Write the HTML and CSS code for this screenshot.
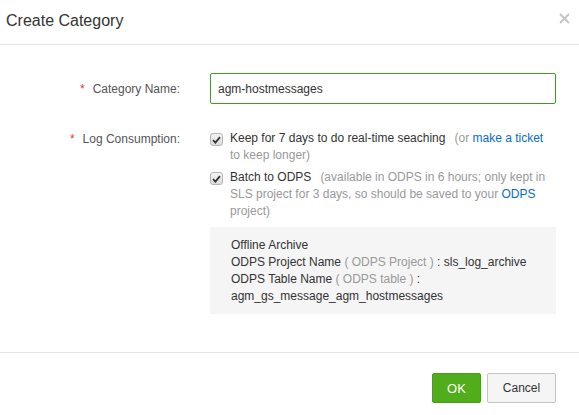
FILE: index.html
```html
<!DOCTYPE html>
<html>
<head>
<meta charset="utf-8">
<link rel="stylesheet" href="styles.css">
</head>
<body>
<div class="dialog">
  <div class="header">
    <div class="title">Create Category</div>
    <span class="close" aria-label="close">
      <svg width="11" height="11" viewBox="0 0 11 11"><path d="M1 1L10 10M10 1L1 10" stroke="#c4c4c4" stroke-width="1.8" fill="none"/></svg>
    </span>
  </div>
  <div class="form">
    <div class="row row-input">
      <div class="label"><span class="req">*</span>Category Name:</div>
      <div class="field"><div class="input">agm-hostmessages</div></div>
    </div>
    <div class="row">
      <div class="label"><span class="req">*</span>Log Consumption:</div>
      <div class="field">
        <div class="check-item">
          <span class="cb"><svg width="9" height="8" viewBox="0 0 9 8"><path d="M1 4.2L3.4 6.6L8 1.2" stroke="#333" stroke-width="1.8" fill="none"/></svg></span>
          <div class="check-text">Keep for 7 days to do real-time seaching<span class="muted note">(or <a class="link">make a ticket</a><br>to keep longer)</span></div>
        </div>
        <div class="check-item">
          <span class="cb"><svg width="9" height="8" viewBox="0 0 9 8"><path d="M1 4.2L3.4 6.6L8 1.2" stroke="#333" stroke-width="1.8" fill="none"/></svg></span>
          <div class="check-text">Batch to ODPS<span class="muted note">(available in ODPS in 6 hours; only kept in SLS project for 3 days, so should be saved to your <a class="link">ODPS</a> project)</span></div>
        </div>
        <div class="archive">
          <div>Offline Archive</div>
          <div>ODPS Project Name <span class="muted">( ODPS Project )</span> : sls_log_archive</div>
          <div>ODPS Table Name <span class="muted">( ODPS table )</span> : agm_gs_message_agm_hostmessages</div>
        </div>
      </div>
    </div>
  </div>
  <div class="footer">
    <button class="btn btn-ok">OK</button>
    <button class="btn btn-cancel">Cancel</button>
  </div>
</div>
</body>
</html>
```
FILE: styles.css
```css
html, body {
  margin: 0;
  padding: 0;
  background: #fff;
}
body {
  font-family: "Liberation Sans", Arial, sans-serif;
  font-size: 12px;
  color: #333;
}
.dialog {
  width: 579px;
  height: 415px;
  display: flex;
  flex-direction: column;
}
.header {
  height: 44px;
  border-bottom: 1px solid #e5e5e5;
  display: flex;
  align-items: center;
  justify-content: space-between;
  padding: 0 9px 0 6px;
}
.title {
  font-size: 16px;
  color: #333;
  line-height: 18px;
  padding-bottom: 2px;
}
.close {
  display: flex;
  padding-bottom: 8px;
}
.form {
  flex: 1;
  padding: 28px 23px 0 0;
  display: flex;
  flex-direction: column;
  gap: 26px;
}
.row {
  display: grid;
  grid-template-columns: 180px 346px;
  column-gap: 30px;
}
.row-input {
  align-items: center;
}
.label {
  text-align: right;
  color: #555;
  line-height: 17px;
  padding-top: 1px;
}
.req {
  color: #e4393c;
  margin-right: 8px;
}
.field {
  display: flex;
  flex-direction: column;
  gap: 5px;
}
.input {
  height: 29px;
  border: 1px solid #3e9f1f;
  border-radius: 2px;
  padding: 0 7px;
  display: flex;
  align-items: center;
  color: #333;
}
.check-item {
  display: flex;
  gap: 7px;
  line-height: 17px;
}
.cb {
  flex: none;
  width: 11px;
  height: 11px;
  margin-top: 3px;
  border: 1px solid #b5b5b5;
  border-radius: 3px;
  background: linear-gradient(#f4f4f4, #dcdcdc);
  display: flex;
  align-items: center;
  justify-content: center;
}
.check-text {
  flex: 1;
  color: #333;
}
.muted {
  color: #999;
}
.note {
  margin-left: 9px;
}
.link {
  color: #0a6bc4;
  text-decoration: none;
}
.archive {
  margin-top: 2px;
  background: #f5f5f5;
  padding: 10px 20px 9px 21px;
  line-height: 17px;
  color: #333;
}
.footer {
  height: 63px;
  border-top: 1px solid #e5e5e5;
  display: flex;
  justify-content: flex-end;
  align-items: flex-start;
  gap: 6px;
  padding: 20px 23px 0 0;
  box-sizing: border-box;
}
.btn {
  height: 30px;
  font-family: "Liberation Sans", Arial, sans-serif;
  font-size: 12px;
  border-radius: 2px;
  padding: 0;
  cursor: pointer;
}
.btn-ok {
  width: 49px;
  background: #51ad1b;
  border: 1px solid #47a014;
  color: #fff;
  font-size: 13px;
}
.btn-cancel {
  width: 69px;
  background: #f5f5f5;
  border: 1px solid #c4c4c4;
  color: #333;
}
```
